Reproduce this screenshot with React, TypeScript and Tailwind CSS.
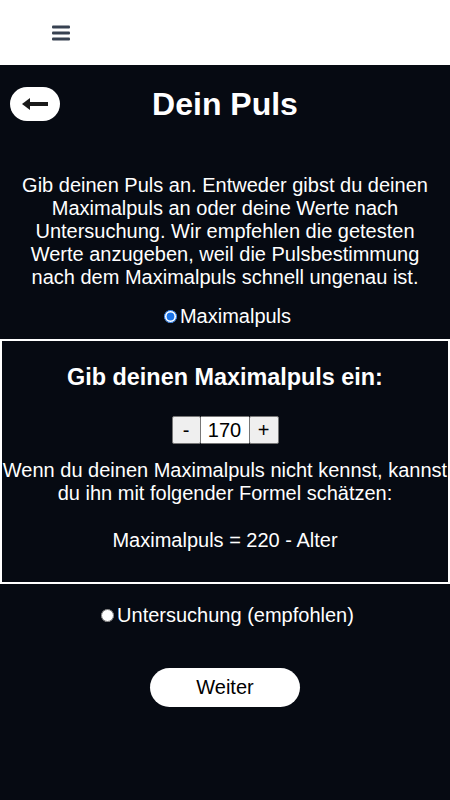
import { useState } from "react";

export default function App() {
  const [mode, setMode] = useState("max");
  const [puls, setPuls] = useState(170);

  return (
    <div className="min-h-[800px] bg-[#060a12] text-white font-['Liberation_Sans',Arial,sans-serif] text-[20px] leading-[23px]">
      <div className="h-[65px] bg-white flex items-center pl-[52px]">
        <svg width="18" height="16" viewBox="0 0 18 16">
          <rect x="0" y="0.5" width="18" height="3" rx="1" fill="#374151" />
          <rect x="0" y="6.5" width="18" height="3" rx="1" fill="#374151" />
          <rect x="0" y="12.5" width="18" height="3" rx="1" fill="#374151" />
        </svg>
      </div>

      <div className="relative flex items-center justify-center h-[37px] mt-[21px]">
        <button className="absolute left-[10px] top-[1px] w-[50px] h-[34px] rounded-full bg-white flex items-center justify-center">
          <svg width="27" height="12" viewBox="0 0 27 12">
            <path d="M5 6h21" stroke="#1a1a1a" strokeWidth="4" />
            <path d="M0 6l8-6v12z" fill="#1a1a1a" />
          </svg>
        </button>
        <h1 className="text-[32px] leading-[37px] font-bold">Dein Puls</h1>
      </div>

      <p className="text-center px-[20px] mt-[51px]">
        Gib deinen Puls an. Entweder gibst du deinen Maximalpuls an oder deine Werte nach Untersuchung. Wir
        empfehlen die getesten Werte anzugeben, weil die Pulsbestimmung nach dem Maximalpuls schnell ungenau ist.
      </p>

      <label className="flex items-center justify-center mt-[16px] h-[23px]">
        <input
          type="radio"
          checked={mode === "max"}
          onChange={() => setMode("max")}
          className="w-[13px] h-[13px] accent-[#1a73e8] ml-[5px] mr-[3px]"
        />
        Maximalpuls
      </label>

      <div className="mt-[11px] border-2 border-white h-[245px] flex flex-col items-center pt-[23px]">
        <h2 className="text-[23.4px] leading-[27px] font-bold">Gib deinen Maximalpuls ein:</h2>
        <div className="flex mt-[25px] text-black h-[28px]">
          <button
            onClick={() => setPuls(puls - 1)}
            className="w-[29px] bg-[#efefef] border border-[#767676] rounded-[2px]"
          >
            -
          </button>
          <div className="w-[48px] bg-white flex items-center justify-center border-y border-[#767676]">{puls}</div>
          <button
            onClick={() => setPuls(puls + 1)}
            className="w-[30px] bg-[#efefef] border border-[#767676] rounded-[2px]"
          >
            +
          </button>
        </div>
        <p className="text-center mt-[15px]">
          Wenn du deinen Maximalpuls nicht kennst, kannst du ihn mit folgender Formel schätzen:
        </p>
        <p className="mt-[24px]">Maximalpuls = 220 - Alter</p>
      </div>

      <label className="flex items-center justify-center mt-[20px] h-[23px]">
        <input
          type="radio"
          checked={mode === "test"}
          onChange={() => setMode("test")}
          className="w-[13px] h-[13px] accent-[#1a73e8] ml-[5px] mr-[3px]"
        />
        Untersuchung (empfohlen)
      </label>

      <div className="flex justify-center mt-[41px]">
        <button className="w-[150px] h-[39px] rounded-full bg-white text-black">Weiter</button>
      </div>
    </div>
  );
}
